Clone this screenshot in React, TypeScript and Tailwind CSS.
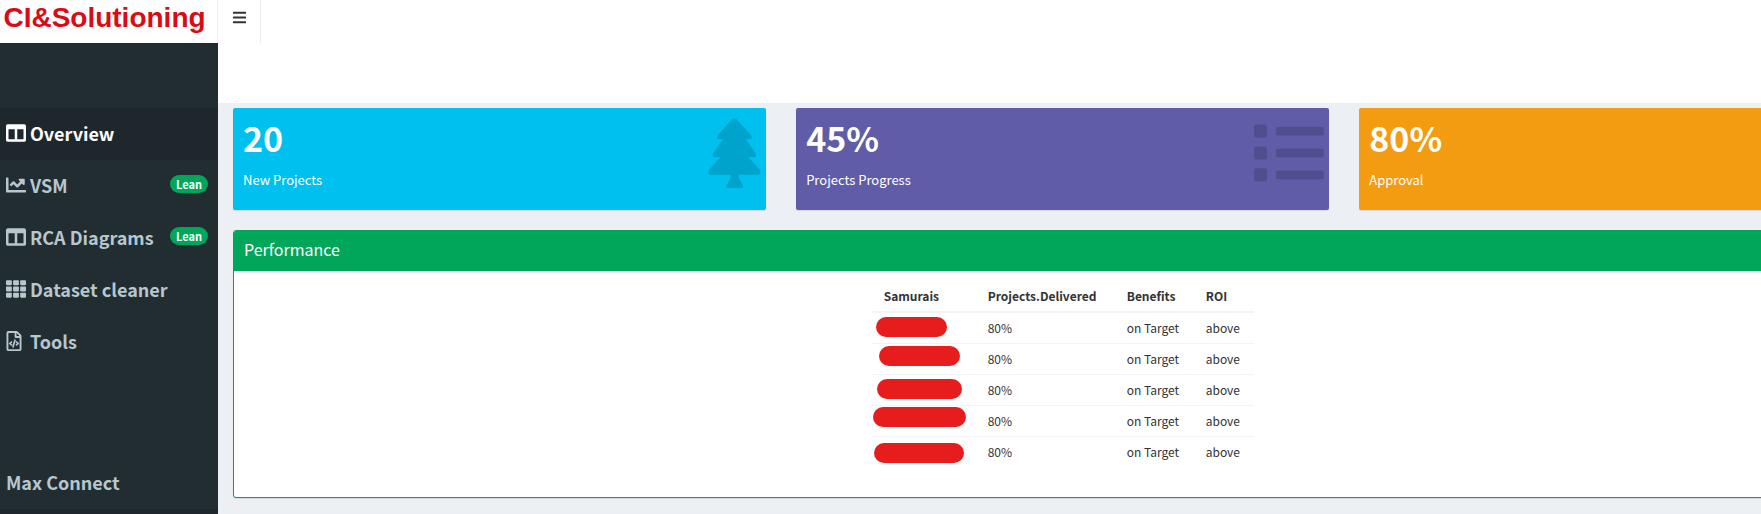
import React from "react";
import { FaBars, FaChartLine, FaColumns, FaList, FaRegFileCode, FaTh } from "react-icons/fa";
import type { IconType } from "react-icons";

type MenuItem = { label: string; icon: IconType; badge?: string; active?: boolean };

const menu: MenuItem[] = [
  { label: "Overview", icon: FaColumns, active: true },
  { label: "VSM", icon: FaChartLine, badge: "Lean" },
  { label: "RCA Diagrams", icon: FaColumns, badge: "Lean" },
  { label: "Dataset cleaner", icon: FaTh },
  { label: "Tools", icon: FaRegFileCode },
];

function ConiferIcon() {
  return (
    <svg viewBox="87 56 158 210" className="h-[70px] w-[53px] text-black/15" fill="currentColor" aria-hidden="true">
      <path d="M160 59 Q166 54 172 59 L216 108 Q221 120 210 120 H198 Q201 122 204 125 L229 162 Q234 174 223 174 H208 L242 212 Q248 226 234 226 H179 V237 L192 259 Q193 266 187 266 H146 Q139 266 141 259 L154 237 V226 H97 Q83 226 89 212 L123 174 H108 Q97 174 102 162 L127 125 Q130 122 133 120 H121 Q110 120 115 108 Z" />
    </svg>
  );
}

function ListIcon() {
  return <FaList size={70} className="text-black/15" />;
}

const cards: { value: string; label: string; color: string; Icon?: () => React.JSX.Element }[] = [
  { value: "20", label: "New Projects", color: "bg-[#00c0ef]", Icon: ConiferIcon },
  { value: "45%", label: "Projects Progress", color: "bg-[#605ca8]", Icon: ListIcon },
  { value: "80%", label: "Approval", color: "bg-[#f39c12]" },
];

const redactions = [
  "left-1 top-1 w-[71px]",
  "left-[7px] top-0.5 w-[81px]",
  "left-[5px] top-1 w-[85px]",
  "left-px top-px w-[93px]",
  "left-0.5 top-1.5 w-[90px]",
];

function Sidebar() {
  return (
    <aside className="flex w-[218px] shrink-0 flex-col bg-[#222d32] pt-[65px]">
      <nav className="flex grow flex-col text-[18px] leading-[26px] font-bold text-[#b8c7ce]">
        {menu.map(({ label, icon: Icon, badge, active }) => (
          <a
            key={label}
            href="#"
            className={`flex h-[52px] items-center pr-[10px] pb-0.5 pl-[6px] ${active ? "bg-[#1e282c] text-white" : ""}`}
          >
            <span className="flex w-[24px] shrink-0">
              <Icon size={20} className={label === "Tools" ? "-ml-0.5" : ""} />
            </span>
            <span className="grow whitespace-nowrap">{label}</span>
            {badge && (
              <span className="mb-0.5 rounded-full bg-[#00a65a] px-1.5 text-[11px] leading-[18px] text-white">{badge}</span>
            )}
          </a>
        ))}
        <a href="#" className="mt-[89px] flex h-[52px] items-center px-[6px] pb-0.5">
          Max Connect
        </a>
        <div className="min-h-[5px] grow bg-[#1e282c]" />
      </nav>
    </aside>
  );
}

function Performance() {
  return (
    <section className="mt-5 overflow-hidden rounded-[3px] border border-[#00a65a] bg-white shadow-[0_1px_1px_rgba(0,0,0,0.1)]">
      <h2 className="bg-[#00a65a] px-[10px] pt-2 pb-3 text-[16px] leading-[20px] text-white">Performance</h2>
      <div className="flex min-h-[226px] justify-center px-[10px] pt-[9px] pb-[10px]">
        <table className="h-fit border-collapse text-left text-[12px] leading-[20px] text-[#333]">
          <thead>
            <tr className="h-[32px] border-b-2 border-[#f4f4f4]">
              <th className="w-[104px] px-3 font-bold">Samurais</th>
              <th className="w-[139px] px-3 font-bold">Projects.Delivered</th>
              <th className="w-[79px] px-3 font-bold">Benefits</th>
              <th className="w-[60px] px-3 font-bold">ROI</th>
            </tr>
          </thead>
          <tbody>
            {redactions.map((mark) => (
              <tr key={mark} className="h-[31px] border-b border-[#f4f4f4] last:border-b-0">
                <td className="relative">
                  <span className={`absolute h-5 rounded-full bg-[#e71d1d] ${mark}`} />
                </td>
                <td className="px-3">80%</td>
                <td className="px-3 whitespace-nowrap">on Target</td>
                <td className="px-3">above</td>
              </tr>
            ))}
          </tbody>
        </table>
      </div>
    </section>
  );
}

export default function App() {
  return (
    <div className="flex min-h-screen flex-col bg-[#ecf0f5] font-['Noto_Sans_CJK_SC','Noto_Sans',sans-serif]">
      <header className="flex h-[43px] bg-white">
        <a
          href="#"
          className="flex w-[218px] shrink-0 justify-center border-r border-[#eee] pr-2 font-['Liberation_Sans',Arial,sans-serif] text-[28px] leading-[36px] font-bold text-[#d90c15]"
        >
          CI&amp;Solutioning
        </a>
        <button aria-label="Toggle navigation" className="flex w-[43px] justify-center border-r border-[#eee] pt-[10px] text-[#333]">
          <FaBars size={15} />
        </button>
      </header>
      <div className="flex grow">
        <Sidebar />
        <main className="min-w-0 grow overflow-hidden">
          <div className="h-[60px] bg-white" />
          <div className="pt-[5px] pb-4 pl-[15px]">
            {/* The dashboard canvas is wider than the viewport and clips on the right. */}
            <div className="w-[108.6%]">
              <div className="grid grid-cols-3 gap-[30px]">
                {cards.map(({ value, label, color, Icon }) => (
                  <article
                    key={label}
                    className={`flex h-[102px] justify-between rounded-[2px] pt-[10px] pr-[5px] pl-[10px] text-white shadow-[0_1px_1px_rgba(0,0,0,0.1)] ${color}`}
                  >
                    <div>
                      <p className="text-[34px] leading-[40px] font-bold">{value}</p>
                      <p className="mt-3 text-[13px] leading-[20px]">{label}</p>
                    </div>
                    {Icon && <Icon />}
                  </article>
                ))}
              </div>
              <Performance />
            </div>
          </div>
        </main>
      </div>
    </div>
  );
}
